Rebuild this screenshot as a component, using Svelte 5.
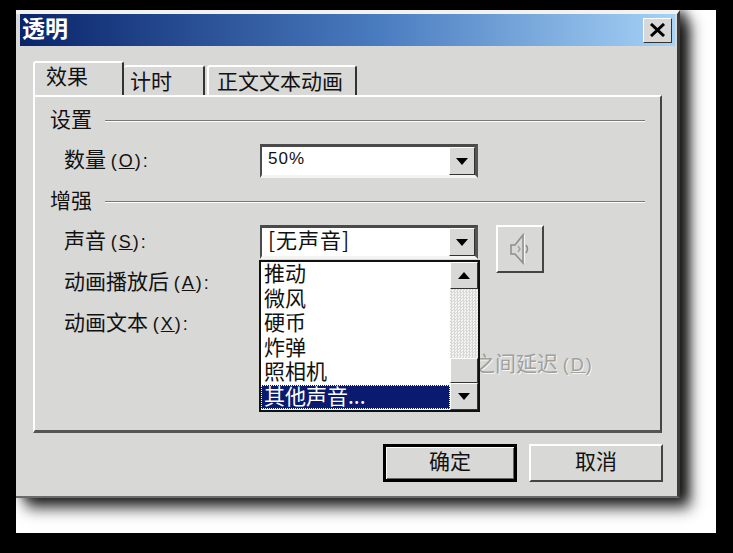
<script lang="ts">
  const items = ['推动', '微风', '硬币', '炸弹', '照相机'];
</script>

<div class="page">
  <div class="frame">
    <div class="dialog">
      <div class="titlebar">
        <span class="title">透明</span>
        <button class="close" aria-label="关闭">
          <svg width="17" height="14" viewBox="0 0 17 14">
            <path d="M2 1 L15 13 M15 1 L2 13" stroke="#000" stroke-width="3" fill="none" />
          </svg>
        </button>
      </div>

      <div class="tabs">
        <div class="tab active">效果</div>
        <div class="tab second">计时</div>
        <div class="tab third">正文文本动画</div>
      </div>

      <div class="panel">
        <div class="legend first"><span>设置</span><i></i></div>
        <div class="row amount">
          <span class="label">数量 <span class="key">(<u>O</u>):</span></span>
          <div class="combo">
            <span class="value small">50%</span>
            <span class="arrow-btn"><b class="down"></b></span>
          </div>
        </div>

        <div class="legend"><span>增强</span><i></i></div>
        <div class="row sound">
          <span class="label">声音 <span class="key">(<u>S</u>):</span></span>
          <div class="combo">
            <span class="value">[无声音]</span>
            <span class="arrow-btn"><b class="down"></b></span>
          </div>
          <button class="speaker" aria-label="播放">
            <svg width="24" height="36" viewBox="0 0 24 36">
              <path d="M15 4 L15 32 L7 23 L3 23 L3 14 L7 14 Z" fill="#d8d8d5" stroke="#8c8c8a" stroke-width="1.5" />
              <path d="M16.5 4 L16.5 32" stroke="#f6f6f4" stroke-width="1" />
              <path d="M10 15 L12 18 L10 21" stroke="#a4a4a2" stroke-width="1.5" fill="none" />
              <path d="M18 14 Q21 18 18 22" stroke="#8c8c8a" stroke-width="1.5" fill="none" />
            </svg>
          </button>
        </div>
        <div class="row after"><span class="label">动画播放后 <span class="key">(<u>A</u>):</span></span></div>
        <div class="row text"><span class="label">动画文本 <span class="key">(<u>X</u>):</span></span></div>

        <span class="delay">之间延迟 <span class="key">(<u>D</u>)</span></span>

        <div class="dropdown">
          <ul>
            {#each items as item}
              <li>{item}</li>
            {/each}
            <li class="selected">其他声音...</li>
          </ul>
          <div class="scrollbar">
            <span class="arrow-btn tall"><b class="up"></b></span>
            <div class="track"><span class="thumb"></span></div>
            <span class="arrow-btn tall"><b class="down"></b></span>
          </div>
        </div>
      </div>

      <div class="actions">
        <button class="btn default">确定</button>
        <button class="btn">取消</button>
      </div>
    </div>
  </div>
</div>

<style>
  :global(body) {
    background: #000;
  }

  .page {
    width: 733px;
    height: 553px;
    background: #000;
    padding: 10px 0 0 16px;
    box-sizing: border-box;
    overflow: hidden;
    font-family: "Noto Sans CJK SC", "Liberation Sans", sans-serif;
    font-size: 21px;
    color: #111;
  }

  .frame {
    width: 700px;
    height: 523px;
    background: #fff;
    overflow: hidden;
  }

  .dialog {
    width: 664px;
    height: 488px;
    box-sizing: border-box;
    background: #d8d8d6;
    border-top: 4px solid #f2f2f0;
    border-right: 3px solid #3c3c3c;
    border-bottom: 2px solid #6a6a6a;
    padding-left: 4px;
    box-shadow: 10px 10px 14px rgba(0, 0, 0, 0.8), 6px 0 10px rgba(0, 0, 0, 0.6);
  }

  .titlebar {
    width: 655px;
    height: 32px;
    background: linear-gradient(90deg, #0a246a, #4a7cc0 55%, #a6d2f6);
    display: flex;
    align-items: center;
    justify-content: space-between;
    padding: 0 3px 0 2px;
    box-sizing: border-box;
  }

  .title {
    color: #fff;
    font-weight: 700;
    font-size: 23px;
    line-height: 1;
    padding-bottom: 5px;
  }

  .close {
    width: 29px;
    height: 25px;
    padding: 0;
    background: #d8d8d6;
    border: 1px solid;
    border-color: #fff #333 #333 #fff;
    display: flex;
    align-items: center;
    justify-content: center;
  }

  .tabs {
    display: flex;
    align-items: flex-end;
    height: 49px;
    margin-left: 13px;
    box-sizing: border-box;
  }

  .tab {
    box-sizing: border-box;
    border-top: 2px solid #fff;
    border-left: 2px solid #fff;
    border-right: 2px solid #333;
    border-radius: 3px 3px 0 0;
    line-height: 1;
  }

  .tab.active {
    width: 91px;
    height: 34px;
    padding: 2px 0 0 11px;
  }

  .tab.second {
    width: 81px;
    height: 30px;
    padding: 3px 0 0 6px;
    border-left: none;
  }

  .tab.third {
    width: 150px;
    height: 30px;
    margin-left: 2px;
    padding: 3px 0 0 8px;
  }

  .panel {
    position: relative;
    margin-left: 13px;
    width: 629px;
    height: 338px;
    box-sizing: border-box;
    border-top: 2px solid #fff;
    border-left: 2px solid #fff;
    border-right: 2px solid #444;
    border-bottom: 3px solid #555;
    padding-top: 12px;
  }

  .legend {
    display: flex;
    align-items: center;
    height: 24px;
    margin: 12px 15px 0 15px;
    gap: 13px;
    line-height: 1;
  }

  .legend.first {
    margin-top: 0;
  }

  .legend span {
    padding-bottom: 5px;
  }

  .legend i {
    flex: 1;
    height: 1px;
    background: #777;
    border-bottom: 1px solid #fff;
  }

  .row {
    display: flex;
    align-items: center;
    height: 24px;
    margin-top: 12px;
    padding-left: 29px;
    line-height: 1;
  }

  .row.amount {
    height: 34px;
    margin-top: 11px;
  }

  .row.sound {
    height: 34px;
    margin-top: 11px;
    position: relative;
  }

  .row.text {
    margin-top: 17px;
  }

  .label {
    width: 196px;
    flex: none;
    white-space: nowrap;
    padding-bottom: 4px;
    box-sizing: border-box;
  }

  .key {
    font-family: "Liberation Sans", sans-serif;
    font-size: 18px;
    letter-spacing: 2px;
  }

  .combo {
    width: 218px;
    height: 34px;
    box-sizing: border-box;
    background: #fff;
    border-top: 3px solid #4a4a4a;
    border-left: 2px solid #4a4a4a;
    border-right: 3px solid #555;
    border-bottom: 3px solid #f4f4f2;
    display: flex;
    align-items: stretch;
    justify-content: space-between;
  }

  .value {
    padding-left: 6px;
    line-height: 23px;
    letter-spacing: 1px;
  }

  .value.small {
    font-family: "Liberation Sans", sans-serif;
    font-size: 17px;
  }

  .arrow-btn {
    width: 26px;
    box-sizing: border-box;
    background: #d8d8d6;
    border: 1px solid;
    border-color: #fff #333 #333 #fff;
    display: flex;
    align-items: center;
    justify-content: center;
    flex: none;
  }

  .arrow-btn.tall {
    height: 27px;
    width: 28px;
  }

  .down,
  .up {
    width: 0;
    height: 0;
    border-left: 6px solid transparent;
    border-right: 6px solid transparent;
  }

  .down {
    border-top: 7px solid #000;
  }

  .up {
    border-bottom: 7px solid #000;
  }

  .speaker {
    width: 48px;
    height: 48px;
    margin-left: 18px;
    margin-top: 13px;
    padding: 0;
    background: #d8d8d6;
    border: 2px solid;
    border-color: #fff #444 #444 #fff;
    display: flex;
    align-items: center;
    justify-content: center;
  }

  .delay {
    position: absolute;
    left: 439px;
    top: 253px;
    color: #a0a09e;
    text-shadow: 1px 1px 0 #f4f4f2;
    white-space: nowrap;
    line-height: 24px;
  }

  .dropdown {
    position: absolute;
    left: 224px;
    top: 163px;
    width: 221px;
    height: 152px;
    box-sizing: border-box;
    background: #fff;
    border: 2px solid #111;
    display: flex;
    justify-content: space-between;
  }

  ul {
    list-style: none;
    margin: 0;
    padding: 0;
    flex: 1;
  }

  li {
    height: 24.5px;
    line-height: 20px;
    padding-left: 3px;
  }

  li.selected {
    background: #0a1a6e;
    color: #fff;
    outline: 1px dotted #fff;
    outline-offset: -1px;
    letter-spacing: 0;
  }

  .scrollbar {
    width: 28px;
    display: flex;
    flex-direction: column;
    flex: none;
  }

  .track {
    flex: 1;
    display: flex;
    align-items: flex-end;
    background: repeating-conic-gradient(#d8d8d6 0 25%, #f4f4f2 0 50%) 0 0 / 3px 3px;
  }

  .thumb {
    display: block;
    width: 28px;
    height: 25px;
    box-sizing: border-box;
    background: #d8d8d6;
    border: 1px solid;
    border-color: #fff #333 #333 #fff;
  }

  .actions {
    display: flex;
    justify-content: flex-end;
    gap: 12px;
    width: 643px;
    margin-top: 11px;
  }

  .btn {
    width: 134px;
    height: 38px;
    padding: 0 0 5px;
    font: inherit;
    color: #111;
    line-height: 1;
    background: #d8d8d6;
    border: 2px solid;
    border-color: #fff #444 #444 #fff;
  }

  .btn.default {
    border: 3px solid #000;
    box-shadow: inset 1px 1px 0 #fff, inset -1px -1px 0 #666;
  }
</style>
